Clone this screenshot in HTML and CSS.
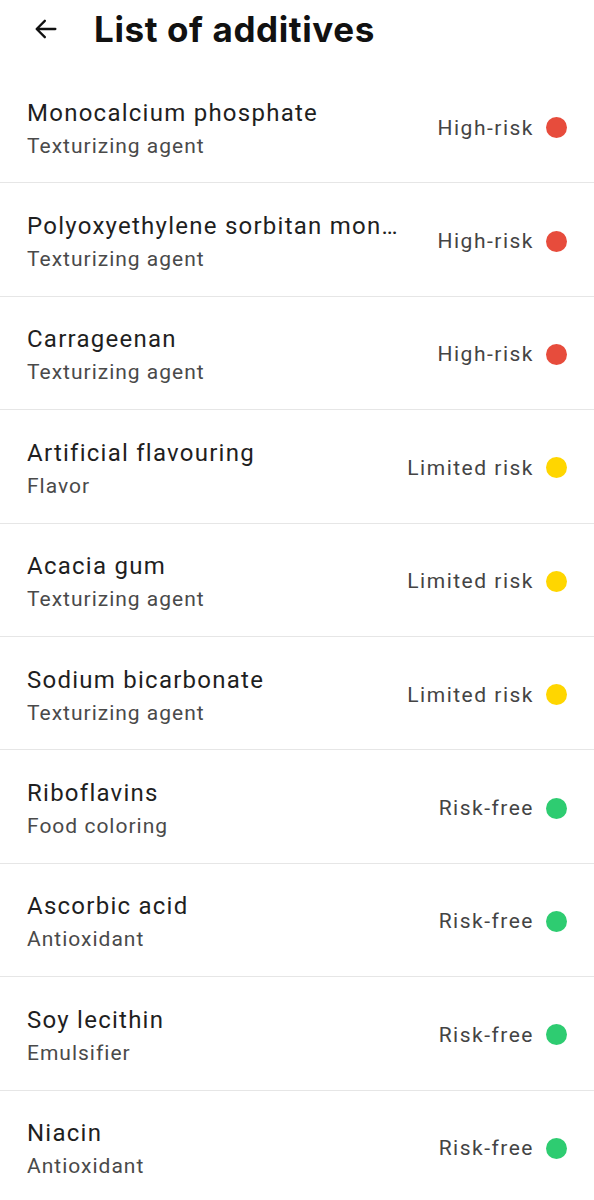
FILE: index.html
```html
<!DOCTYPE html>
<html>
<head>
<meta charset="utf-8">
<link rel="stylesheet" href="styles.css">
</head>
<body>
<header class="topbar">
  <svg class="back" width="28" height="28" viewBox="0 0 24 24"><path d="M20 12H5M11 5l-7 7 7 7" fill="none" stroke="#111" stroke-width="2" stroke-linecap="round" stroke-linejoin="round"/></svg>
  <h1 class="title">List of additives</h1>
</header>
<ul class="list">
  <li class="row"><div class="info"><div class="name">Monocalcium phosphate</div><div class="type">Texturizing agent</div></div><div class="risk">High-risk<span class="dot red"></span></div></li>
  <li class="row"><div class="info"><div class="name">Polyoxyethylene sorbitan monostearate</div><div class="type">Texturizing agent</div></div><div class="risk">High-risk<span class="dot red"></span></div></li>
  <li class="row"><div class="info"><div class="name">Carrageenan</div><div class="type">Texturizing agent</div></div><div class="risk">High-risk<span class="dot red"></span></div></li>
  <li class="row"><div class="info"><div class="name">Artificial flavouring</div><div class="type">Flavor</div></div><div class="risk">Limited risk<span class="dot yellow"></span></div></li>
  <li class="row"><div class="info"><div class="name">Acacia gum</div><div class="type">Texturizing agent</div></div><div class="risk">Limited risk<span class="dot yellow"></span></div></li>
  <li class="row"><div class="info"><div class="name">Sodium bicarbonate</div><div class="type">Texturizing agent</div></div><div class="risk">Limited risk<span class="dot yellow"></span></div></li>
  <li class="row"><div class="info"><div class="name">Riboflavins</div><div class="type">Food coloring</div></div><div class="risk">Risk-free<span class="dot green"></span></div></li>
  <li class="row"><div class="info"><div class="name">Ascorbic acid</div><div class="type">Antioxidant</div></div><div class="risk">Risk-free<span class="dot green"></span></div></li>
  <li class="row"><div class="info"><div class="name">Soy lecithin</div><div class="type">Emulsifier</div></div><div class="risk">Risk-free<span class="dot green"></span></div></li>
  <li class="row"><div class="info"><div class="name">Niacin</div><div class="type">Antioxidant</div></div><div class="risk">Risk-free<span class="dot green"></span></div></li>
</ul>
</body>
</html>
```
FILE: styles.css
```css
* { box-sizing: border-box; }
html, body { margin: 0; padding: 0; background: #fff; }
body { font-family: Roboto, "Noto Sans", sans-serif; color: #222; overflow: hidden; }
.topbar { height: 70px; display: flex; align-items: center; padding: 0 0 12px 32px; }
.back { flex: none; }
.title { margin: 0 0 0 34px; font-family: Inter, "Noto Sans", sans-serif; font-weight: 700; font-size: 35px; letter-spacing: 0.6px; color: #111; }
.list { list-style: none; margin: 0; padding: 0; }
.row { height: 113.4px; display: flex; align-items: center; padding: 0 27px 0 27px; border-bottom: 1px solid #e6e6e6; }
.info { flex: 1; min-width: 0; padding-right: 33px; padding-top: 6px; }
.name { font-size: 24px; line-height: 34px; letter-spacing: 1.25px; color: #1f1f1f; white-space: nowrap; overflow: hidden; text-overflow: ellipsis; }
.type { font-size: 21px; line-height: 33px; letter-spacing: 1px; color: #4a4a4a; }
.risk { flex: none; display: flex; align-items: center; font-size: 21px; letter-spacing: 1.5px; color: #444; padding-top: 3px; }
.dot { width: 21px; height: 21px; border-radius: 50%; margin-left: 12px; }
.red { background: #e74c3c; }
.yellow { background: #ffd600; }
.green { background: #2ecc71; }
```
